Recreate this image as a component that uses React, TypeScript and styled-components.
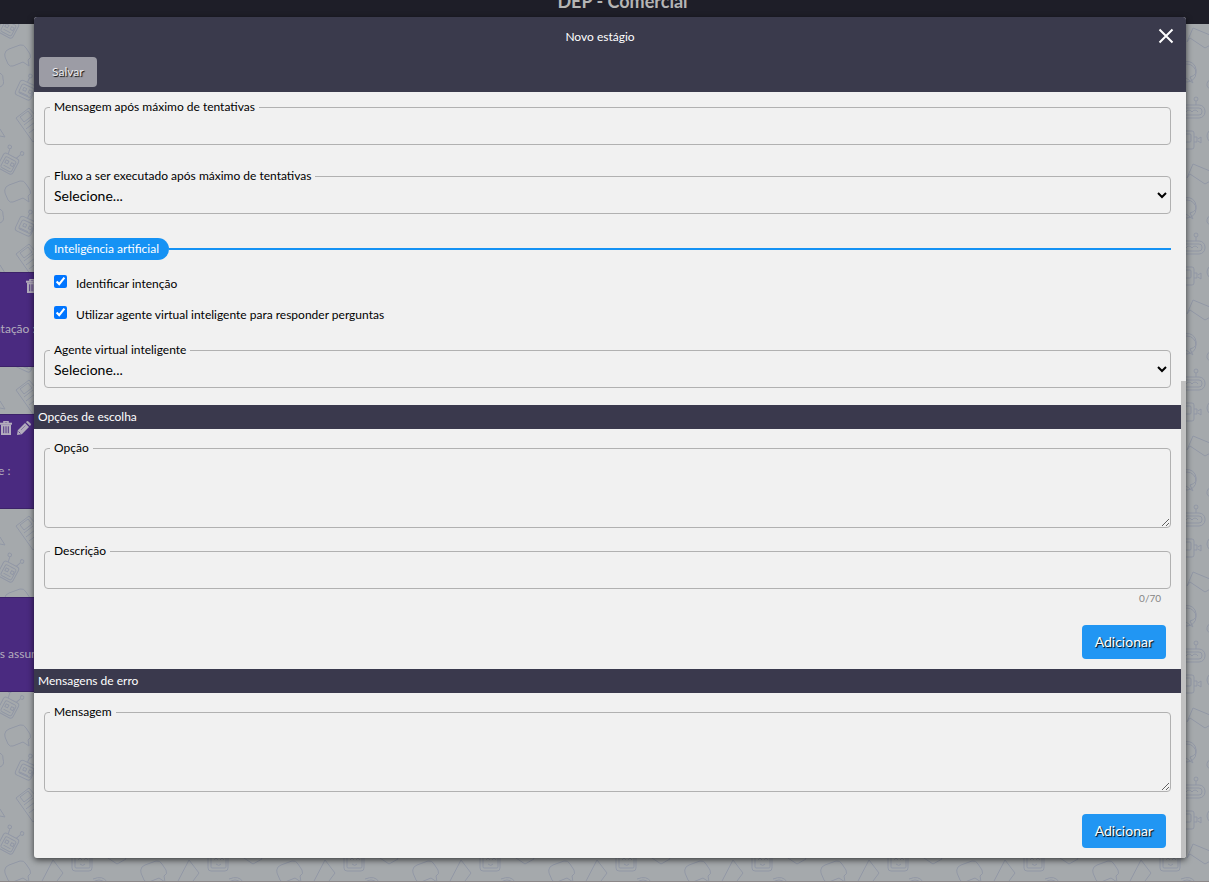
import React from "react";
import styled, { createGlobalStyle } from "styled-components";

const GlobalStyle = createGlobalStyle`
  *, *::before, *::after { box-sizing: border-box; }
  html, body { margin: 0; height: 100%; }
  #root { height: 100%; }
  body { overflow: hidden; font-family: Lato, "Liberation Sans", sans-serif; font-size: 12px; color: #000; }
  button, input, select, textarea { font-family: inherit; color: inherit; }
`;

const Page = styled.div`
  display: grid;
  height: 100vh;
  > * { grid-area: 1 / 1; min-width: 0; min-height: 0; }
`;

const Backdrop = styled.div`
  display: flex;
  flex-direction: column;
  border-bottom: 1px solid #8b8788;
`;

const TopBar = styled.header`
  display: flex;
  justify-content: center;
  align-items: flex-start;
  height: 24px;
  flex: none;
  padding-left: 36px;
  overflow: hidden;
  background: #1e1e28;
`;

const BoardTitle = styled.h1`
  margin: -10px 0 0;
  font-size: 18px;
  line-height: 22px;
  font-weight: 700;
  color: #b5b5b5;
`;

const Board = styled.main`
  position: relative;
  flex: 1;
  overflow: hidden;
  background: #a5a9ac;
`;

const Wallpaper = styled.svg`
  display: block;
  width: 100%;
  height: 100%;
`;

const Node = styled.article<{ $top: number }>`
  position: absolute;
  left: -160px;
  top: ${(p) => p.$top}px;
  width: 200px;
  height: 95px;
  border: 1px solid #3c2269;
  background: #4a2a80;
  color: #b3adbd;
`;

const NodeText = styled.p<{ $left: number }>`
  position: absolute;
  left: ${(p) => p.$left}px;
  top: 48px;
  margin: 0;
  line-height: 16px;
  white-space: nowrap;
`;

const NodeTools = styled.div<{ $left: number }>`
  position: absolute;
  left: ${(p) => p.$left}px;
  top: 6px;
  display: flex;
  gap: 4px;
`;

const Overlay = styled.div`
  position: relative;
  display: flex;
  padding: 17px 23px 24px 34px;
`;

const Dialog = styled.section`
  display: flex;
  flex-direction: column;
  flex: 1;
  min-width: 0;
  border-radius: 3px;
  overflow: hidden;
  background: #f1f1f1;
  box-shadow: 0 2px 6px rgba(0, 0, 0, 0.65);
`;

const DialogHeader = styled.header`
  flex: none;
  background: #3a3a4c;
  color: #fff;
`;

const TitleRow = styled.div`
  display: flex;
  align-items: center;
  height: 40px;
  padding: 0 10px;
`;

const DialogTitle = styled.h2`
  flex: 1;
  margin: 0;
  text-align: center;
  font-size: 12px;
  line-height: 16px;
  font-weight: 400;
`;

const CloseButton = styled.button`
  display: flex;
  padding: 0;
  margin-bottom: 2px;
  border: 0;
  background: none;
  color: #fff;
`;

const Toolbar = styled.div`
  display: flex;
  padding: 0 5px 5px;
`;

const Button = styled.button<{ $primary?: boolean }>`
  height: ${(p) => (p.$primary ? 34 : 30)}px;
  padding: 0 13px 2px;
  border: 0;
  border-radius: 4px;
  background: ${(p) => (p.$primary ? "#2196f3" : "#9c9ca5")};
  color: ${(p) => (p.$primary ? "#fff" : "#ececee")};
  font-size: ${(p) => (p.$primary ? 14 : 12)}px;
  text-shadow: 1px 1px 1px #000;
`;

const DialogBody = styled.div`
  display: flex;
  flex: 1;
  min-height: 0;
`;

const Form = styled.form`
  flex: 1;
  min-width: 0;
  overflow: hidden;
`;

const ScrollTrack = styled.div`
  display: grid;
  grid-template-rows: 289fr 477fr;
  width: 5px;
`;

const ScrollThumb = styled.div`
  grid-row: 2;
  background: #c1c1c1;
`;

const Group = styled.div<{ $top: number; $bottom: number }>`
  display: flex;
  flex-direction: column;
  padding: ${(p) => p.$top}px 10px ${(p) => p.$bottom}px;
`;

const Field = styled.div<{ $after?: number }>`
  position: relative;
  display: flex;
  margin-bottom: ${(p) => p.$after ?? 0}px;
`;

const FieldLabel = styled.label`
  position: absolute;
  left: 6px;
  top: -8px;
  padding: 0 4px;
  line-height: 16px;
  background: #f1f1f1;
`;

const control = `
  width: 100%;
  margin: 0;
  border: 1px solid #b1b1b1;
  border-radius: 4px;
  background: transparent;
  outline: none;
  font-size: 14px;
`;

const TextInput = styled.input`
  ${control}
  height: 38px;
  padding: 0 9px;
`;

const Select = styled.select`
  ${control}
  height: 38px;
  padding: 0 0 0 5px;
`;

const TextArea = styled.textarea`
  ${control}
  height: 80px;
  padding: 10px 9px;
  resize: vertical;
`;

const Divider = styled.div`
  display: flex;
  align-items: center;
  margin-bottom: 14px;
  &::after { content: ""; flex: 1; height: 2px; background: #1592f4; }
`;

const Pill = styled.h3`
  margin: 0;
  padding: 0 10px;
  border-radius: 11px;
  background: #1592f4;
  color: #fff;
  font-size: 12px;
  line-height: 22px;
  font-weight: 400;
`;

const CheckList = styled.div`
  margin-bottom: 14px;
`;

const CheckRow = styled.label`
  display: flex;
  align-items: flex-start;
  gap: 9px;
  height: 31px;
  padding: 1px 10px 0;
  line-height: 18px;
`;

const Checkbox = styled.input`
  width: 13px;
  height: 13px;
  margin: 0;
`;

const SectionBar = styled.h3`
  margin: 0;
  padding: 0 4px;
  background: #3a394d;
  color: #fff;
  font-size: 12px;
  line-height: 24px;
  font-weight: 400;
`;

const Counter = styled.span`
  padding: 0 10px;
  margin-bottom: 18px;
  text-align: right;
  font-size: 10px;
  line-height: 18px;
  color: #858585;
`;

const Actions = styled.div`
  display: flex;
  justify-content: flex-end;
  padding-right: 5px;
`;

const TrashIcon = () => (
  <svg width="14" height="14" viewBox="0 0 14 14" fill="none" stroke="currentColor" aria-hidden="true">
    <path d="M1 2.7h12" strokeWidth="2" />
    <path d="M5 2V.8h4V2" strokeWidth="1.6" />
    <path d="M2 3.5h10V14H2z" fill="currentColor" stroke="none" />
    <path d="M4.7 5.3v6.9M7 5.3v6.9M9.3 5.3v6.9" stroke="#4a2a80" strokeWidth=".9" />
  </svg>
);

const PencilIcon = () => (
  <svg width="14" height="14" viewBox="0 0 14 14" fill="currentColor" aria-hidden="true">
    <path d="M0 14l.8-4.8L8 2l4 4-7.2 7.2zM8.9 1.1l.8-.7q.8-.8 1.7 0l2.2 2.2q.8.8 0 1.7l-.7.8z" />
    <path d="M1.6 10.6l1.8 1.8" stroke="#4a2a80" strokeWidth=".8" />
    <path d="M4 9l4.5-4.5" stroke="#4a2a80" strokeWidth=".4" />
  </svg>
);

const RobotHead = () => (
  <g>
    <rect x="-8" y="-8" width="17" height="17" rx="3" />
    <rect x="-5" y="-5" width="12" height="12" rx="2" />
    <path d="M-3-2h3v3h-3zM3-2h3v3H3zM-3 4h8M-4-8l-1-5M5-8l2-5" />
    <circle cx="-6" cy="-15" r="1.8" />
    <circle cx="8" cy="-15" r="1.8" />
  </g>
);

const BotWallpaper = () => (
  <Wallpaper aria-hidden="true">
    <defs>
      <pattern id="bots" width="136" height="136" patternUnits="userSpaceOnUse">
        <g fill="none" stroke="#9197a5" strokeWidth="1" strokeLinejoin="round">
          <g transform="translate(8 3) rotate(28)"><RobotHead /></g>
          <g transform="translate(8 139) rotate(28)"><RobotHead /></g>
          <path d="M9 25l11-4q4-1 6 3l4 6q2 4-2 6l1 6-6-4-10 4q-3 1-5-2l-3-7q-1-3 1-6z" />
          <g transform="translate(25 66) rotate(25)">
            <rect x="-8" y="-8" width="17" height="16" rx="3" />
            <rect x="-5" y="-5" width="13" height="10" rx="2" />
            <path d="M-2-2h3v3h-3zM4-2h3v3H4zM-4 4h9M-1-8v-5" />
            <circle cx="-1" cy="-15" r="1.8" />
          </g>
          <path d="M0 49q4 2 3 6 2 6-3 8M0 105l5 8-5-1" />
          <path d="M16 94l13-10 19 22-15 12zM20 93l8-6 4 5-8 6zM24 101l9-7M26 105l9-7M29 109l9-7" />
          <path d="M53 20l10 13-9 12-13-2z" />
          <rect x="72" y="9" width="20" height="22" rx="3" />
          <rect x="75" y="11" width="15" height="17" rx="1" />
          <path d="M78 20l2-2 2 2M84 20l2-2 2 2M80 24q3 3 5 0" />
          <circle cx="99" cy="49" r="9" />
          <path d="M99 18l6-14 17 7 4 8-9 5-15-10z" />
          <path d="M93 39q10-4 14 3 4 9-5 11l3 6-7-5" />
          <path d="M136 50q-8-3-10 4-8 2-7 8 2 6 17 2" />
          <circle cx="108" cy="75" r="2" />
          <path d="M108 77v4" />
          <rect x="90" y="81" width="27" height="13" rx="6" />
          <rect x="93" y="84" width="21" height="7" rx="3" />
          <path d="M98 88q3-4 6 0 3-4 6 0" />
          <rect x="89" y="107" width="17" height="18" rx="2" />
          <rect x="92" y="110" width="11" height="8" rx="1" />
          <path d="M106 113h3v5h-3M110 115l3-2v6l-3-2" />
          <circle cx="126" cy="112" r="7" />
          <path d="M50 65h22v16H58l-6 6v-6h-2zM48 118l14-8 9 14-14 8z" />
        </g>
      </pattern>
    </defs>
    <rect width="100%" height="100%" fill="url(#bots)" />
  </Wallpaper>
);

export default function App() {
  return (
    <>
      <GlobalStyle />
      <Page>
        <Backdrop>
          <TopBar>
            <BoardTitle>DEP - Comercial</BoardTitle>
          </TopBar>
          <Board>
            <BotWallpaper />
            <Node $top={248}>
              <NodeTools $left={184}><TrashIcon /></NodeTools>
              <NodeText $left={153}>ntação :</NodeText>
            </Node>
            <Node $top={390}>
              <NodeTools $left={158}><TrashIcon /><PencilIcon /></NodeTools>
              <NodeText $left={157}>e :</NodeText>
            </Node>
            <Node $top={573}>
              <NodeText $left={152}>os assuntos</NodeText>
            </Node>
          </Board>
        </Backdrop>

        <Overlay>
          <Dialog role="dialog" aria-labelledby="dialog-title">
            <DialogHeader>
              <TitleRow>
                <DialogTitle id="dialog-title">Novo estágio</DialogTitle>
                <CloseButton type="button" aria-label="Fechar">
                  <svg width="20" height="20" viewBox="0 0 20 20" stroke="currentColor" strokeWidth="2" aria-hidden="true">
                    <path d="M3.5 3.5l13 13M16.5 3.5l-13 13" />
                  </svg>
                </CloseButton>
              </TitleRow>
              <Toolbar>
                <Button type="button">Salvar</Button>
              </Toolbar>
            </DialogHeader>

            <DialogBody>
              <Form>
                <Group $top={15} $bottom={17}>
                  <Field $after={31}>
                    <TextInput id="max-msg" type="text" />
                    <FieldLabel htmlFor="max-msg">Mensagem após máximo de tentativas</FieldLabel>
                  </Field>
                  <Field $after={24}>
                    <Select id="max-flow"><option>Selecione...</option></Select>
                    <FieldLabel htmlFor="max-flow">Fluxo a ser executado após máximo de tentativas</FieldLabel>
                  </Field>
                  <Divider><Pill>Inteligência artificial</Pill></Divider>
                  <CheckList>
                    <CheckRow>
                      <Checkbox type="checkbox" defaultChecked />
                      Identificar intenção
                    </CheckRow>
                    <CheckRow>
                      <Checkbox type="checkbox" defaultChecked />
                      Utilizar agente virtual inteligente para responder perguntas
                    </CheckRow>
                  </CheckList>
                  <Field>
                    <Select id="agent"><option>Selecione...</option></Select>
                    <FieldLabel htmlFor="agent">Agente virtual inteligente</FieldLabel>
                  </Field>
                </Group>

                <SectionBar>Opções de escolha</SectionBar>
                <Group $top={19} $bottom={10}>
                  <Field $after={23}>
                    <TextArea id="option" />
                    <FieldLabel htmlFor="option">Opção</FieldLabel>
                  </Field>
                  <Field>
                    <TextInput id="description" type="text" maxLength={70} />
                    <FieldLabel htmlFor="description">Descrição</FieldLabel>
                  </Field>
                  <Counter>0/70</Counter>
                  <Actions><Button type="button" $primary>Adicionar</Button></Actions>
                </Group>

                <SectionBar>Mensagens de erro</SectionBar>
                <Group $top={19} $bottom={10}>
                  <Field $after={22}>
                    <TextArea id="message" />
                    <FieldLabel htmlFor="message">Mensagem</FieldLabel>
                  </Field>
                  <Actions><Button type="button" $primary>Adicionar</Button></Actions>
                </Group>
              </Form>
              <ScrollTrack><ScrollThumb /></ScrollTrack>
            </DialogBody>
          </Dialog>
        </Overlay>
      </Page>
    </>
  );
}
